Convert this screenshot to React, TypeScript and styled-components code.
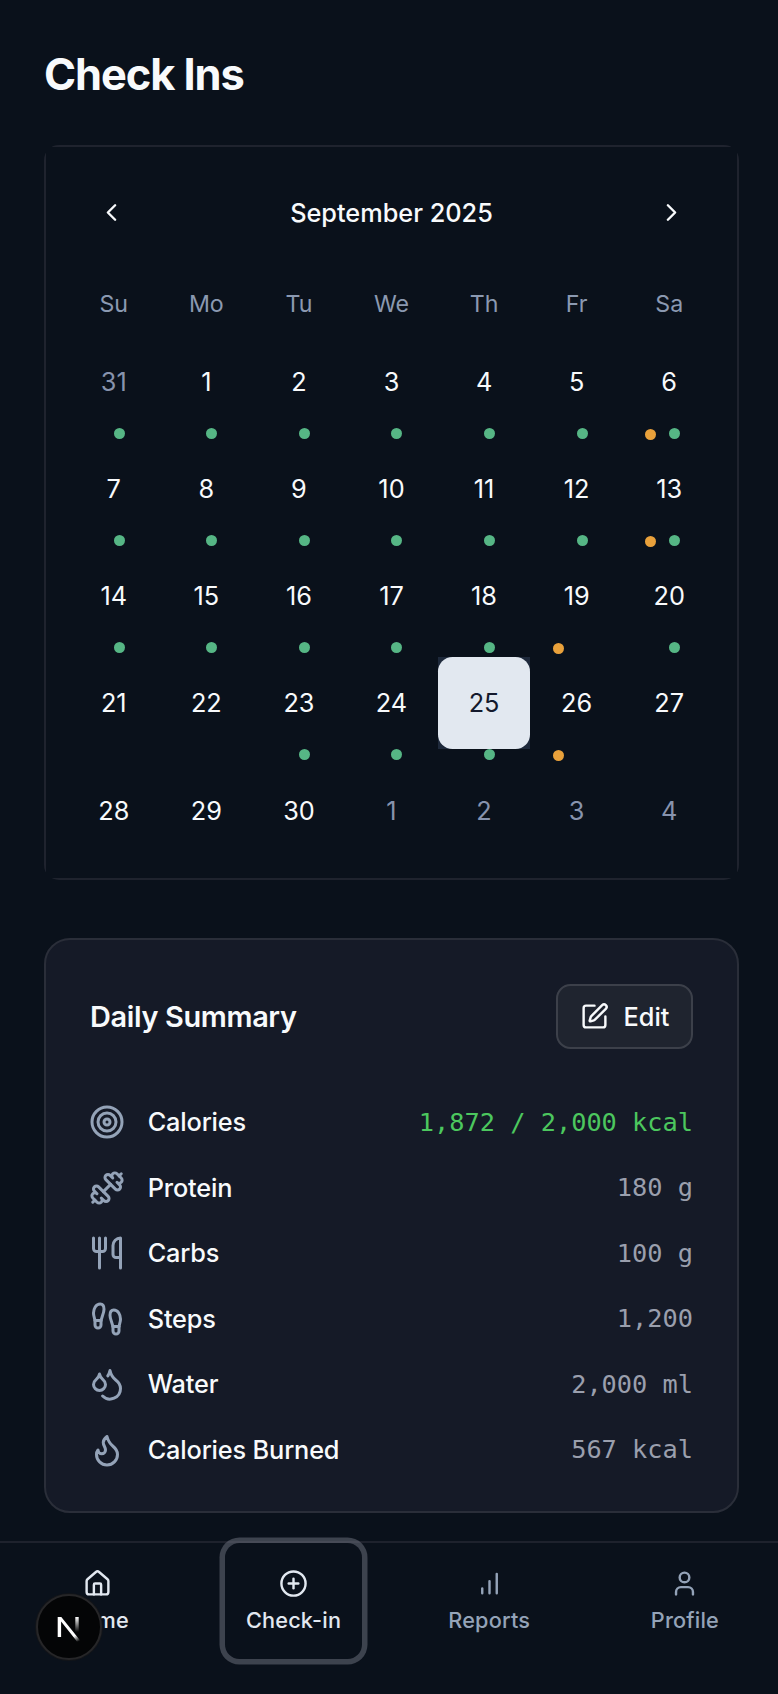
import React from "react";
import styled, { createGlobalStyle, css } from "styled-components";
import {
  ChevronLeft,
  ChevronRight,
  CirclePlus,
  Droplets,
  Dumbbell,
  Flame,
  Footprints,
  House,
  SquarePen,
  Target,
  User,
  Utensils,
  type LucideIcon,
} from "lucide-react";

const GlobalStyle = createGlobalStyle`
  *, *::before, *::after { box-sizing: border-box; }
  body {
    margin: 0;
    background: #0a111b;
    color: #f8fafc;
    font-family: Inter, "Liberation Sans", sans-serif;
    overflow: hidden;
  }
  button { font: inherit; color: inherit; background: none; border: 0; padding: 0; }
`;

const Page = styled.div`
  height: 1694px;
  overflow: hidden;
  display: flex;
  flex-direction: column;
`;

const Main = styled.main`
  height: 1541px;
  padding: 45px 39px 0 44px;
`;

const Title = styled.h1`
  margin: 0 0 42px;
  font-size: 43.4px;
  line-height: 58px;
  font-weight: 700;
  letter-spacing: -0.025em;
`;

/* The calendar surface is square-cornered and sits over the frame's rounded corners. */
const CalendarFrame = styled.section`
  border: 2px solid #1f232e;
  border-radius: 15px;
`;

const CalendarSurface = styled.div`
  background: #0a111b;
  padding: 21px 21.5px 22.5px;
`;

const MonthBar = styled.header`
  display: flex;
  align-items: center;
  justify-content: space-between;
  height: 88px;
  padding: 0 29px;
  font-size: 25.3px;
  font-weight: 500;
`;

const MonthButton = styled.button`
  display: flex;
`;

const Weekdays = styled.div`
  display: grid;
  grid-template-columns: repeat(7, 1fr);
  margin: 29px 0 12.5px;
  color: #8b99b1;
  font-size: 23.2px;
  line-height: 38px;
  text-align: center;
`;

const Days = styled.div`
  display: grid;
  grid-template-columns: repeat(7, 1fr);
  grid-auto-rows: 91.7px;
  row-gap: 15.5px;
`;

const DayCell = styled.div<{ $selected?: boolean }>`
  position: relative;
  background: ${(p) => (p.$selected ? "#1e293b" : "transparent")};
`;

const DayButton = styled.button<{ $outside?: boolean; $selected?: boolean }>`
  width: 100%;
  height: 100%;
  border-radius: 14.5px;
  font-size: 25.3px;
  color: ${(p) => (p.$outside ? "#8793ad" : "#f8fafc")};
  ${(p) =>
    p.$selected &&
    css`
      background: #e2e8f0;
      color: #14192c;
    `}
`;

const Dot = styled.span<{ $kind: "green" | "orange" }>`
  position: absolute;
  left: 50%;
  top: ${(p) => (p.$kind === "green" ? 92.2 : 93.2)}px;
  width: 11px;
  height: 11px;
  margin-left: ${(p) => (p.$kind === "green" ? 0 : -24)}px;
  border-radius: 50%;
  background: ${(p) => (p.$kind === "green" ? "#56b685" : "#e9a13b")};
`;

const SummaryCard = styled.section`
  margin-top: 58px;
  height: 575px;
  padding: 44px 44px 0;
  border: 2px solid #2a2e39;
  border-radius: 26px;
  background: #151a27;
`;

const SummaryHeader = styled.header`
  display: flex;
  align-items: center;
  justify-content: space-between;
  margin-bottom: 40px;
`;

const SummaryTitle = styled.h2`
  margin: 0;
  font-size: 28.9px;
  font-weight: 600;
  letter-spacing: -0.012em;
`;

const EditButton = styled.button`
  display: flex;
  align-items: center;
  gap: 15px;
  height: 65px;
  width: 137px;
  padding-left: 21.5px;
  border: 2px solid #3c404a;
  border-radius: 14.5px;
  background: #1f242f;
  font-size: 25.3px;
  font-weight: 500;
`;

const MetricRow = styled.div`
  display: flex;
  align-items: center;
  height: 65.5px;
  font-size: 25.3px;
  font-weight: 500;
  letter-spacing: -0.006em;

  svg {
    margin: 0 22.5px 0 -0.8px;
    color: #94a3b8;
  }
`;

const MetricLabel = styled.span`
  padding-bottom: 1px;
`;

const MetricValue = styled.span<{ $good?: boolean }>`
  margin-left: auto;
  font-family: "DejaVu Sans Mono", monospace;
  font-weight: 400;
  font-size: 25.3px;
  letter-spacing: 0;
  color: ${(p) => (p.$good ? "#4cc75e" : "#9a9fad")};
`;

const NavBar = styled.nav`
  display: grid;
  grid-template-columns: repeat(4, 195.7px);
  justify-items: center;
  align-items: start;
  height: 153px;
  border-top: 2px solid #1e222d;
`;

const NavItem = styled.a<{ $bright?: boolean; $focused?: boolean }>`
  display: flex;
  flex-direction: column;
  align-items: center;
  gap: 8px;
  width: 137.5px;
  height: 116px;
  padding-top: 26px;
  border-radius: 14.5px;
  color: ${(p) => (p.$bright ? "#e2e8f0" : "#94a3b8")};
  font-size: 21.7px;
  line-height: 29px;
  font-weight: 500;
  letter-spacing: 0.008em;
  ${(p) =>
    p.$focused &&
    css`
      box-shadow: 0 0 0 5.5px rgba(110, 114, 126, 0.52);
    `}
`;

const DevBadge = styled.div`
  position: fixed;
  left: 36px;
  top: 1594px;
  width: 66px;
  height: 66px;
  border-radius: 50%;
  background: #040506;
  border: 2px solid #262628;
  box-shadow: 0 0 0 1px #131519;
`;

const weekdays = ["Su", "Mo", "Tu", "We", "Th", "Fr", "Sa"];

const dayNumbers = [31, ...Array.from({ length: 30 }, (_, i) => i + 1), 1, 2, 3, 4];
const greenCells = new Set([0, 1, 2, 3, 4, 5, 6, 7, 8, 9, 10, 11, 12, 13, 14, 15, 16, 17, 18, 20, 23, 24, 25]);
const orangeCells = new Set([6, 13, 19, 26]);
const selectedCell = 25;

const metrics: { icon: LucideIcon; label: string; value: string; good?: boolean }[] = [
  { icon: Target, label: "Calories", value: "1,872 / 2,000 kcal", good: true },
  { icon: Dumbbell, label: "Protein", value: "180 g" },
  { icon: Utensils, label: "Carbs", value: "100 g" },
  { icon: Footprints, label: "Steps", value: "1,200" },
  { icon: Droplets, label: "Water", value: "2,000 ml" },
  { icon: Flame, label: "Calories Burned", value: "567 kcal" },
];

function BarsIcon() {
  return (
    <svg width="29" height="29" viewBox="0 0 24 24" fill="none" stroke="currentColor" strokeWidth="2" strokeLinecap="round">
      <path d="M12 20V10M18 20V4M6 20v-4" />
    </svg>
  );
}

function NextMark() {
  return (
    <svg width="62" height="62" viewBox="0 0 62 62" fill="none">
      <defs>
        <linearGradient id="diag" x1="36" y1="33" x2="43.5" y2="43.5" gradientUnits="userSpaceOnUse">
          <stop stopColor="#fff" />
          <stop offset="0.45" stopColor="#fff" />
          <stop offset="1" stopColor="#fff" stopOpacity="0" />
        </linearGradient>
        <linearGradient id="stem" x1="39" y1="21" x2="39" y2="36" gradientUnits="userSpaceOnUse">
          <stop stopColor="#fff" />
          <stop offset="1" stopColor="#fff" stopOpacity="0" />
        </linearGradient>
      </defs>
      <path d="M19.7 21h3.6L43 45.5h-4L23.1 25.6V41h-3.4z" fill="url(#diag)" />
      <path d="M37.3 21h3.4v17h-3.4z" fill="url(#stem)" />
    </svg>
  );
}

export default function App() {
  return (
    <Page>
      <GlobalStyle />
      <Main>
        <Title>Check Ins</Title>
        <CalendarFrame>
          <CalendarSurface>
            <MonthBar>
              <MonthButton aria-label="Previous month">
                <ChevronLeft size={29} />
              </MonthButton>
              <span>September 2025</span>
              <MonthButton aria-label="Next month">
                <ChevronRight size={29} />
              </MonthButton>
            </MonthBar>
            <Weekdays>
              {weekdays.map((d) => (
                <span key={d}>{d}</span>
              ))}
            </Weekdays>
            <Days>
              {dayNumbers.map((n, i) => (
                <DayCell key={i} $selected={i === selectedCell}>
                  <DayButton $outside={i === 0 || i > 30} $selected={i === selectedCell}>
                    {n}
                  </DayButton>
                  {orangeCells.has(i) && <Dot $kind="orange" />}
                  {greenCells.has(i) && <Dot $kind="green" />}
                </DayCell>
              ))}
            </Days>
          </CalendarSurface>
        </CalendarFrame>
        <SummaryCard>
          <SummaryHeader>
            <SummaryTitle>Daily Summary</SummaryTitle>
            <EditButton>
              <SquarePen size={29} />
              Edit
            </EditButton>
          </SummaryHeader>
          {metrics.map(({ icon: Icon, label, value, good }) => (
            <MetricRow key={label}>
              <Icon size={36} />
              <MetricLabel>{label}</MetricLabel>
              <MetricValue $good={good}>{value}</MetricValue>
            </MetricRow>
          ))}
        </SummaryCard>
      </Main>
      <NavBar>
        <NavItem $bright>
          <House size={29} />
          Home
        </NavItem>
        <NavItem $bright $focused>
          <CirclePlus size={29} />
          Check-in
        </NavItem>
        <NavItem>
          <BarsIcon />
          Reports
        </NavItem>
        <NavItem>
          <User size={29} />
          Profile
        </NavItem>
      </NavBar>
      <DevBadge>
        <NextMark />
      </DevBadge>
    </Page>
  );
}
